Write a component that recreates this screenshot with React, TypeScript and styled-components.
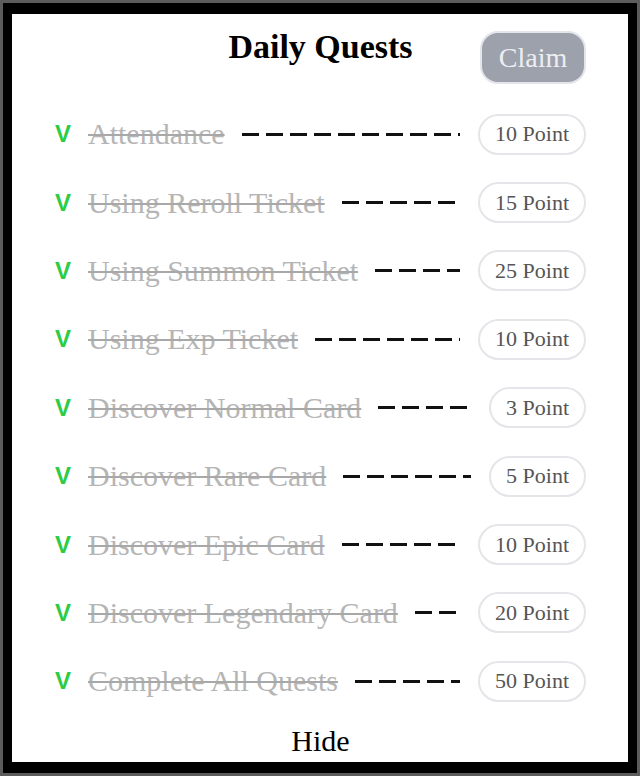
import React from 'react';
import styled, { createGlobalStyle } from 'styled-components';

const quests = [
  { name: 'Attendance', point: 10 },
  { name: 'Using Reroll Ticket', point: 15 },
  { name: 'Using Summon Ticket', point: 25 },
  { name: 'Using Exp Ticket', point: 10 },
  { name: 'Discover Normal Card', point: 3 },
  { name: 'Discover Rare Card', point: 5 },
  { name: 'Discover Epic Card', point: 10 },
  { name: 'Discover Legendary Card', point: 20 },
  { name: 'Complete All Quests', point: 50 },
];

const App: React.FC = () => {
  return (
    <>
      <GlobalStyle />
      <Frame>
        <Panel>
          <Header>
            <span />
            <Title>Daily Quests</Title>
            <ClaimButton disabled>Claim</ClaimButton>
          </Header>

          <QuestList>
            {quests.map((q) => (
              <QuestRow key={q.name}>
                <Check>V</Check>
                <QuestName>{q.name}</QuestName>
                <Dashes />
                <PointPill>{q.point} Point</PointPill>
              </QuestRow>
            ))}
          </QuestList>

          <HideButton>Hide</HideButton>
        </Panel>
      </Frame>
    </>
  );
};

export default App;

const GlobalStyle = createGlobalStyle`
  html, body {
    margin: 0;
    padding: 0;
    background: #5a5a5a;
  }
  * {
    box-sizing: border-box;
  }
`;

const Frame = styled.div`
  width: 640px;
  height: 776px;
  border: 3px solid #5c5c5c;
  background: #000;
  padding: 11px 9px 11px 9px;
`;

const Panel = styled.div`
  height: 100%;
  background: #fff;
  display: flex;
  flex-direction: column;
  padding: 0 42px 0 43px;
  font-family: 'Liberation Serif', 'DejaVu Serif', serif;
`;

const Header = styled.div`
  display: grid;
  grid-template-columns: 1fr auto 1fr;
  align-items: start;
  height: 86px;
  padding-top: 17px;
`;

const Title = styled.h1`
  margin: -4px 0 0;
  font-size: 34px;
  font-weight: bold;
  color: #000;
  line-height: 40px;
`;

const ClaimButton = styled.button`
  justify-self: end;
  width: 106px;
  height: 53px;
  border: 2px solid #e3e5ea;
  border-radius: 18px;
  background: #9ca1ac;
  color: #eceef1;
  font-family: inherit;
  font-size: 28px;
  padding: 0;
`;

const QuestList = styled.div`
  display: flex;
  flex-direction: column;
`;

const QuestRow = styled.div`
  display: flex;
  align-items: center;
  height: 68.4px;
`;

const Check = styled.span`
  width: 17px;
  margin-right: 16px;
  font-family: 'Liberation Sans', Arial, sans-serif;
  font-weight: bold;
  font-size: 24px;
  color: #2ecc45;
  line-height: 1;
`;

const QuestName = styled.span`
  font-size: 30px;
  color: #b5b5b5;
  text-decoration: line-through;
  text-decoration-color: #a8a8a8;
  text-decoration-thickness: 2px;
  white-space: nowrap;
`;

const Dashes = styled.div`
  flex: 1;
  height: 3px;
  margin: 0 18px 0 17px;
  background: repeating-linear-gradient(
    to right,
    #111 0,
    #111 17px,
    transparent 17px,
    transparent 24px
  );
`;

const PointPill = styled.div`
  height: 41px;
  padding: 0 15px;
  display: flex;
  align-items: center;
  border: 2.5px solid #e4e5e9;
  border-radius: 21px;
  font-size: 22px;
  color: #555;
  white-space: nowrap;
`;

const HideButton = styled.button`
  align-self: center;
  margin-top: 8px;
  border: none;
  background: none;
  font-family: inherit;
  font-size: 30px;
  color: #000;
  padding: 0;
`;
